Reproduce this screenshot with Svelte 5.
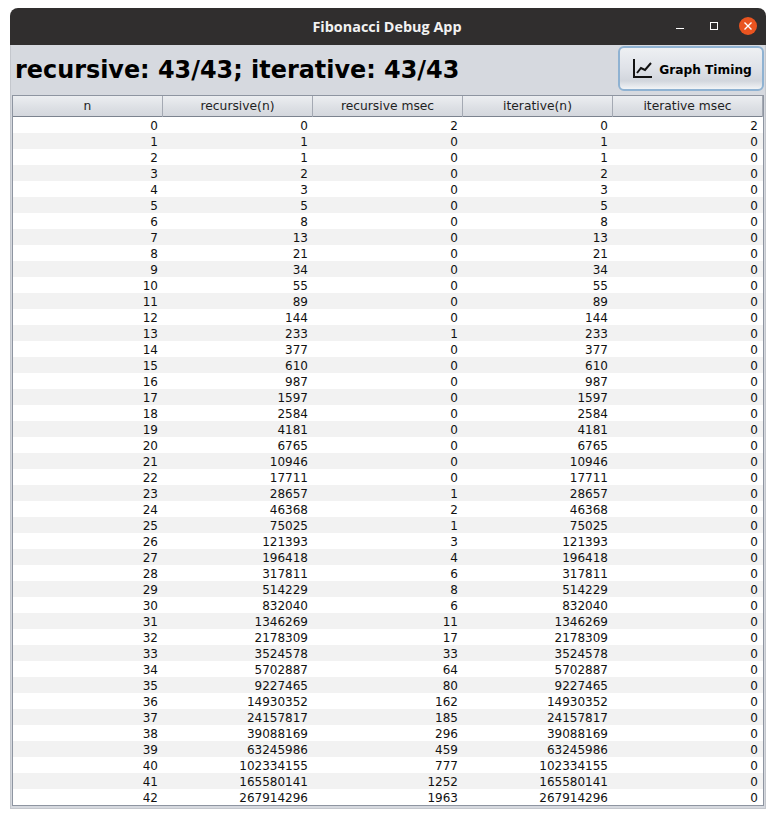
<script>
  const msec = [2,0,0,0,0,0,0,0,0,0,0,0,0,1,0,0,0,0,0,0,0,0,0,1,2,1,3,4,6,8,6,11,17,33,64,80,162,185,296,459,777,1252,1963];
  const fib = [0, 1];
  for (let i = 2; i < 43; i++) fib.push(fib[i - 1] + fib[i - 2]);
  const rows = fib.map((v, n) => [n, v, msec[n], v, n === 0 ? 2 : 0]);
  const heads = ['n', 'recursive(n)', 'recursive msec', 'iterative(n)', 'iterative msec'];
</script>

<div class="page">
  <div class="window">
    <div class="titlebar">
      <span class="title">Fibonacci Debug App</span>
      <div class="controls">
        <svg class="ctl" width="12" height="12" viewBox="0 0 12 12"><path d="M2 8.5h8" stroke="#fff" stroke-width="1" fill="none"/></svg>
        <svg class="ctl" width="12" height="12" viewBox="0 0 12 12"><rect x="2.5" y="2.5" width="7" height="7" stroke="#fff" stroke-width="1" fill="none"/></svg>
        <span class="close">
          <svg width="18" height="18" viewBox="0 0 18 18"><path d="M5.5 5.5l7 7M12.5 5.5l-7 7" stroke="#fff" stroke-width="1.4" fill="none"/></svg>
        </span>
      </div>
    </div>
    <div class="body">
      <div class="top">
        <div class="status">recursive: 43/43; iterative: 43/43</div>
        <button class="btn">
          <svg width="19" height="19" viewBox="0 0 19 19"><path d="M1 0v18h18" stroke="#111" stroke-width="2" fill="none"/><path d="M4 14l4-5 4 2 6-7" stroke="#111" stroke-width="2" fill="none"/></svg>
          <span>Graph Timing</span>
        </button>
      </div>
      <div class="table">
        <div class="head">
          {#each heads as h}<div class="th">{h}</div>{/each}
        </div>
        {#each rows as r, i}
          <div class="row" class:alt={i % 2 === 1}>
            {#each r as c}<div class="td">{c}</div>{/each}
          </div>
        {/each}
      </div>
    </div>
  </div>
</div>

<style>
  :global(body) { margin: 0; background: #fff; }
  .page { width: 776px; height: 818px; padding: 8px 10px 9px; box-sizing: border-box; }
  .window { width: 756px; height: 801px; display: flex; flex-direction: column; font-family: "DejaVu Sans", sans-serif; }
  .titlebar { height: 37px; flex: none; background: #302e2e; border-radius: 8px 8px 0 0; position: relative; display: flex; align-items: center; justify-content: center; }
  .title { color: #f2f2f2; font: bold 14.4px "Open Sans", "Noto Sans", sans-serif; position: relative; left: -1px; }
  .controls { position: absolute; right: 9px; top: 9px; display: flex; align-items: center; gap: 22px; }
  .ctl { display: block; }
  .close { width: 18px; height: 18px; border-radius: 50%; background: #e95420; display: block; margin-left: -3px; }
  .close svg { display: block; }
  .body { flex: 1; background: #d6d9df; border: solid #c4c7cd; border-width: 0 1px 1px; display: flex; flex-direction: column; padding: 0 1px 2px; min-height: 0; }
  .top { height: 50px; flex: none; box-sizing: border-box; padding: 1px 0 4px; display: flex; align-items: center; justify-content: space-between; }
  .status { font-weight: bold; font-size: 23.9px; color: #000; padding: 2px 0 0 3px; }
  .btn { width: 146px; height: 45px; box-sizing: border-box; border: 2px solid #8fb2d2; border-radius: 6px; background: linear-gradient(#eef0f3 0%, #dfe2e8 50%, #d2d6dd 80%, #f2f4f6 100%); display: flex; align-items: center; justify-content: center; gap: 7px; font: bold 12.2px "DejaVu Sans", sans-serif; color: #000; padding: 0 0 0 3px; }
  .btn svg { display: block; }
  .btn span { padding-top: 2px; }
  .table { border: 1px solid #8e95a1; background: #fff; flex: 1; width: 752px; box-sizing: border-box; overflow: hidden; }
  .head { display: grid; grid-template-columns: repeat(5, 150px); height: 20px; border-bottom: 1px solid #7c838f; background: linear-gradient(#eceef1, #dcdfe4 60%, #d4d7dd); }
  .th { font-size: 12.3px; text-align: center; line-height: 21px; color: #1f1f1f; border-right: 1px solid #a4a9b3; box-sizing: border-box; }
  .row { display: grid; grid-template-columns: repeat(5, 150px); height: 16px; background: #fff; }
  .row.alt { background: #f2f2f2; }
  .td { font-size: 12px; line-height: 18px; text-align: right; padding-right: 5px; color: #111; }
</style>
